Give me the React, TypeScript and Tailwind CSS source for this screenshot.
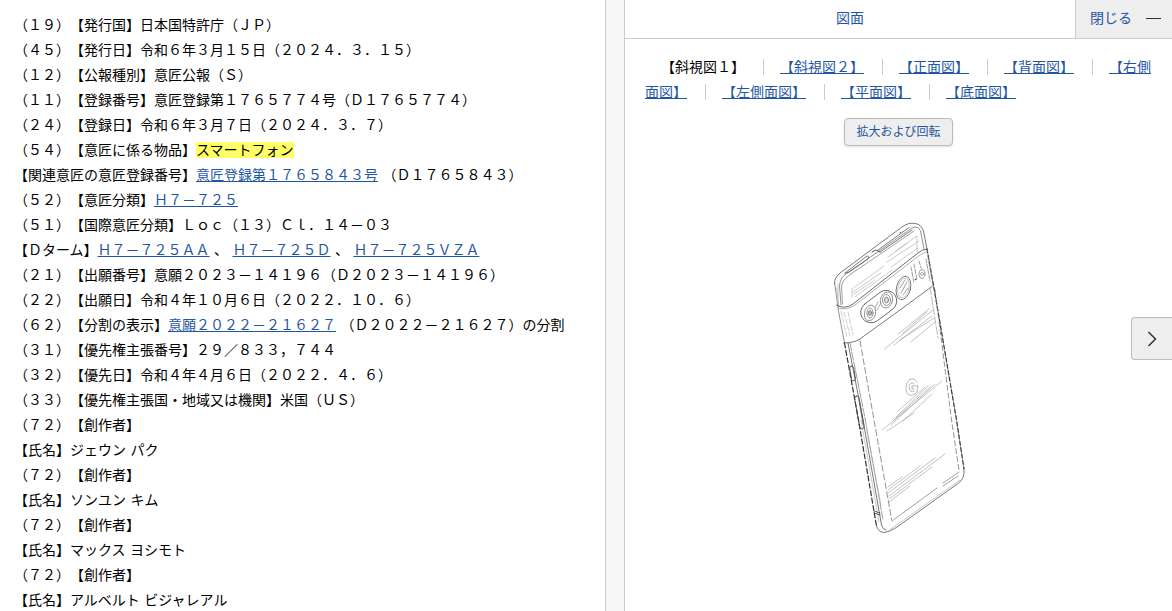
import { ReactNode } from "react";

const linkStyle = "text-[#1f56a3] underline";

const Link = ({ children }: { children: ReactNode }) => (
  <a href="#" className={linkStyle}>{children}</a>
);

const creators = ["ジェウン パク", "ソンユン キム", "マックス ヨシモト", "アルベルト ビジャレアル"];

const views = ["【斜視図２】", "【正面図】", "【背面図】", "【右側面図】", "【左側面図】", "【平面図】", "【底面図】"];

const Bibliography = () => {
  return (
    <section className="flex-1 min-w-0 border-r border-[#ccc] pl-3.5 pt-[13px] leading-[25px]">
      <p>（１９）【発行国】日本国特許庁（ＪＰ）</p>
      <p>（４５）【発行日】令和６年３月１５日（２０２４．３．１５）</p>
      <p>（１２）【公報種別】意匠公報（Ｓ）</p>
      <p>（１１）【登録番号】意匠登録第１７６５７７４号（Ｄ１７６５７７４）</p>
      <p>（２４）【登録日】令和６年３月７日（２０２４．３．７）</p>
      <p>（５４）【意匠に係る物品】<mark className="bg-[#ffff66]">スマートフォン</mark></p>
      <p>【関連意匠の意匠登録番号】<Link>意匠登録第１７６５８４３号</Link> （Ｄ１７６５８４３）</p>
      <p>（５２）【意匠分類】<Link>Ｈ７－７２５</Link></p>
      <p>（５１）【国際意匠分類】Ｌｏｃ（１３）Ｃｌ．１４－０３</p>
      <p>【Ｄターム】<Link>Ｈ７－７２５ＡＡ</Link> 、 <Link>Ｈ７－７２５Ｄ</Link> 、 <Link>Ｈ７－７２５ＶＺＡ</Link></p>
      <p>（２１）【出願番号】意願２０２３－１４１９６（Ｄ２０２３－１４１９６）</p>
      <p>（２２）【出願日】令和４年１０月６日（２０２２．１０．６）</p>
      <p>（６２）【分割の表示】<Link>意願２０２２－２１６２７</Link> （Ｄ２０２２－２１６２７）の分割</p>
      <p>（３１）【優先権主張番号】２９／８３３，７４４</p>
      <p>（３２）【優先日】令和４年４月６日（２０２２．４．６）</p>
      <p>（３３）【優先権主張国・地域又は機関】米国（ＵＳ）</p>
      {creators.map((name) => (
        <div key={name}>
          <p>（７２）【創作者】</p>
          <p>【氏名】{name}</p>
        </div>
      ))}
    </section>
  );
};

const PhoneDrawing = () => (
  <svg width="149" height="330" viewBox="824 215 149 330" fill="none" stroke="#777" strokeWidth="0.8" strokeLinecap="round" role="img" aria-label="斜視図１">
    {/* outline */}
    <path d="M834.5 284 Q834 278 840 273 L902 227 Q909 222 915 223.500 Q921 224 923.500 231 L927 249" stroke="#555" />
    <path d="M834.500 282 L838.500 311 L844.500 343" stroke="#777" />
    <path d="M876.500 526 Q878 532 884 532.500 Q890 532 897 527 L958 483.500 Q965 479 964 469" stroke="#555" />
    <path d="M927 249 L938 311 L956.500 420 L964 469" stroke="#999" />
    <path d="M927 249 L938 311 L956.500 420 L964 469" stroke="#333" strokeWidth="1.1" strokeDasharray="4 2.500" />
    <path d="M844.500 343 L858.500 420 L876.500 526" stroke="#333" strokeWidth="1.200" strokeDasharray="5 2.500" />
    <path d="M888 531 L960 480" stroke="#bbb" />
    {/* top edge */}
    <path d="M841 305 L839.500 286 Q840 278 846 274 L912 228 Q918 225 920.500 231 L924 249" />
    <path d="M842.500 304 L841.500 286 Q842 281 848 276 L914 231" stroke="#888" />
    <path d="M845 273 L867 256 Q870 256 868 259 L849 272 Z M878 250 L909 227.500 M880 252 L912 230" stroke="#555" />
    <path d="M872 252 L876 250 L880 252 M900 233 L901 232" stroke="#333" />
    <path d="M838 284 L838 304 M836.500 288 L839 306" stroke="#bbb" />
    <path d="M852 290 V297 M852 289 L884 266 M853 292 L881 273 M854 294 L875 280 M855 297 L892 270 M887 262 L919 241 M888 257 L907 243 M891 267 L918 248 M896 251 L917 236 V252" stroke="#aaa" strokeWidth="0.600" />
    {/* camera bar */}
    <path d="M836.500 305 Q844 310 853 304 L918 253 Q923 249 927 249" stroke="#444" />
    <path d="M838 308 Q846 311 855 305 L920 255 L928 251" stroke="#999" />
    <path d="M843.500 343 Q857 343 864 336 L900 310 L934 285" stroke="#555" />
    <rect x="859" y="296" width="40" height="21" rx="10.500" transform="rotate(-37 879 307)" stroke="#555" />
    <ellipse cx="870" cy="313" rx="5.500" ry="8" transform="rotate(15 870 313)" strokeDasharray="3 1" />
    <ellipse cx="870" cy="313" rx="3" ry="5" />
    <ellipse cx="870" cy="313" rx="1.500" ry="2.500" fill="#bbb" />
    <ellipse cx="886.500" cy="300" rx="6" ry="8" transform="rotate(15 886.500 300)" strokeDasharray="3 1" />
    <ellipse cx="886.500" cy="300" rx="4" ry="5.500" />
    <ellipse cx="886.500" cy="300" rx="2" ry="3" fill="#ddd" />
    <path d="M875 308 L878 302 M877 310 L881 303" stroke="#999" />
    <ellipse cx="903.500" cy="288" rx="7" ry="12" transform="rotate(14 903.500 288)" stroke="#666" />
    <ellipse cx="903.500" cy="288" rx="5.500" ry="10" transform="rotate(14 903.500 288)" stroke="#bbb" />
    <path d="M900 288 L905 280 M901 293 L907 282 M903 295 L908 288" stroke="#888" />
    <ellipse cx="922" cy="274" rx="3" ry="4.500" stroke="#777" strokeDasharray="2 1" />
    <circle cx="922" cy="274" r="1.500" stroke="#999" />
    <circle cx="915.500" cy="279.500" r="0.400" stroke="#333" />
    <path d="M911 267 L914 283 M914 264 L917 280 M919 261 L921 268 M926 259 L930 281 M928 257 L932 280" stroke="#888" strokeDasharray="4 1.500" />
    {/* frame edges */}
    <path d="M841 311 L847 337 M844 312 L850 336 M848 312 L853 335" stroke="#aaa" strokeWidth="0.600" strokeDasharray="5 2" />
    <path d="M848 343 L863 420 L881.500 525 Q883 530 886 530" stroke="#555" />
    <path d="M850 343 L865 418 L883 520" stroke="#888" strokeDasharray="8 1.500" />
    <path d="M860 341 L874 420 L891.700 520" stroke="#777" strokeDasharray="6 3" />
    <path d="M935 290 L951.500 420 L959 470" stroke="#777" strokeDasharray="5 3" />
    <path d="M930 287 L938 338" stroke="#aaa" strokeDasharray="8 2" />
    <path d="M861 420 L879 522 M867 432 L881 505" stroke="#aaa" strokeWidth="0.600" />
    <path d="M892 521 L937 488 M943 483 L959 472 M943 486 L958 476" stroke="#888" />
    <path d="M874 511 L880 513 M874 513 L880 515" stroke="#333" />
    {/* side keys */}
    <rect x="850.500" y="366" width="4" height="15" rx="2" transform="rotate(-9 852.500 373)" stroke="#444" />
    <rect x="857" y="396" width="4.500" height="33" rx="2" transform="rotate(-10 859 412)" stroke="#444" />
    <path d="M859 400 L863 424" stroke="#666" />
    {/* shading */}
    <g stroke="#999" strokeWidth="0.600">
      <path d="M884.500 349 L933 310 M894 345 L932 316 M900 340 L934 318 M898 334 L929 309 M903 333 L927 312 M911 342 L935 322" />
      <path d="M882 430 L942 381 M891 425 L935 384 M893 421 L930 387 M896 417 L928 386 M898 411 L924 388 M903 421 L932 394 M887 431 L914 413" />
      <path d="M888 487 L902 477 M888 490 L920 466 M888 493 L935 458 M889 496 L945 454 M889 499 L932 467 M889 502 L910 486" />
    </g>
    <g stroke="#999" strokeDasharray="1.500 1">
      <path d="M917 382 Q914 377 909 380 Q904 387 907 393 Q911 398 917 392 L918 386 H912 V389 H914" />
      <path d="M914 384 Q911 381 909 386 Q909 391 913 392 L915 390" />
    </g>
  </svg>
);

const DrawingPanel = () => {
  return (
    <section className="relative flex-1 min-w-0 border-l border-[#ccc]">
      <header className="flex h-[39px] border-b border-[#ccc] text-[#1f56a3]">
        <h2 className="flex-1 text-center leading-9">図面</h2>
        <button className="flex items-center gap-3.5 border-l border-[#ccc] bg-[#eee] pl-3.5 pr-[11px] pb-0.5">
          閉じる
          <span className="w-[15px] h-px bg-[#333]" />
        </button>
      </header>
      <nav className="px-5 pt-4 leading-[25px]">
        <span className="pl-4 pr-[18px]">【斜視図１】</span>
        {views.map((view) => (
          <span key={view} className="border-l border-[#ccc] pl-4 pr-[18px]"><Link>{view}</Link></span>
        ))}
      </nav>
      <div className="flex flex-col items-center">
        <button className="mt-[13px] h-7 px-[11px] rounded-sm border border-[#bbb] bg-[#eee] text-xs text-[#1f56a3] shadow">拡大および回転</button>
        <div className="mt-[69px]">
          <PhoneDrawing />
        </div>
      </div>
      <button aria-label="次へ" className="absolute right-0 top-[317px] flex items-center justify-center w-[41px] h-[43px] rounded-l-sm border border-r-0 border-[#bbb] bg-[#eee]">
        <svg width="10" height="16" viewBox="0 0 10 16" fill="none" stroke="#333" strokeWidth="1.5">
          <path d="M1.500 1 L8.500 8 L1.500 15" />
        </svg>
      </button>
    </section>
  );
};

const App = () => {
  return (
    <main lang="ja" className="flex h-screen overflow-hidden bg-white text-black text-sm font-['DejaVu_Sans','Noto_Sans_CJK_JP',sans-serif] [text-spacing-trim:space-all]">
      <Bibliography />
      <div className="w-[18px] bg-[#f6f6f6]" />
      <div className="flex w-[548px]">
        <DrawingPanel />
      </div>
    </main>
  );
}

export default App;
